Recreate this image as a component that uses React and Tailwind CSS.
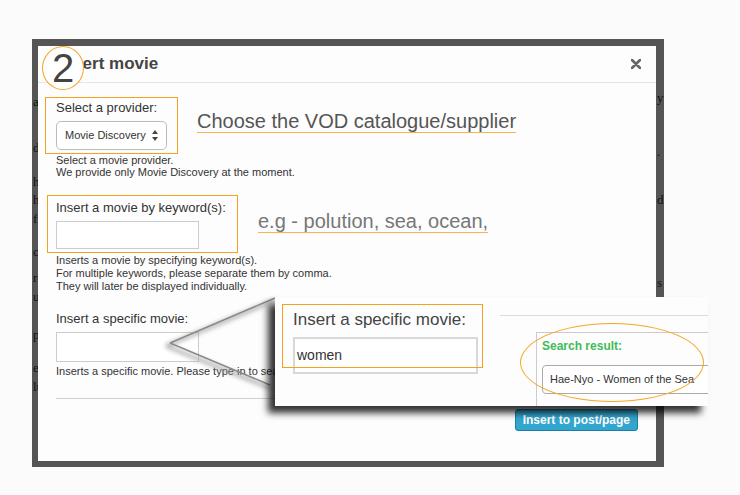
import { useState } from "react";

const frameLeftBits = [
  { t: "ar", y: 55 },
  { t: "d", y: 101 },
  { t: "h", y: 135 },
  { t: "h", y: 153 },
  { t: "ff", y: 172 },
  { t: "c", y: 205 },
  { t: "rc", y: 231 },
  { t: "ur", y: 250 },
  { t: "p-", y: 288 },
  { t: "er", y: 321 },
  { t: "lu", y: 340 },
];

const frameRightBits = [
  { t: "y", y: 51 },
  { t: ".", y: 105 },
  { t: "d", y: 153 },
  { t: "s", y: 236 },
];

const OrangeBox = ({ className }) => (
  <span className={`pointer-events-none absolute border-[1.5px] border-[#f5a01f] ${className}`} />
);

const SelectArrows = () => (
  <svg width="6" height="11" viewBox="0 0 6 11">
    <path d="M3 0 L6 4 L0 4 Z" fill="#444" />
    <path d="M3 11 L6 7 L0 7 Z" fill="#444" />
  </svg>
);

const App = () => {
  const [provider] = useState("Movie Discovery");

  return (
    <div
      className="relative h-[495px] w-[740px] overflow-hidden bg-[#fbfbfb] pl-[32px] pt-[39px] text-[#333]"
      style={{ fontFamily: '"Liberation Sans", Arial, sans-serif' }}
    >
      {/* dark frame of the page behind */}
      <div className="relative h-[428px] w-[632px] bg-[#555] pl-[6px] pt-[7px]">
        {frameLeftBits.map((b, i) => (
          <span
            key={"l" + i}
            className="absolute left-[1px] text-[13px] leading-[16px] text-[#111]"
            style={{ top: b.y, fontFamily: '"Liberation Serif", serif' }}
          >
            {b.t}
          </span>
        ))}
        {frameRightBits.map((b, i) => (
          <span
            key={"r" + i}
            className="absolute left-[625px] text-[13px] leading-[16px] text-[#111]"
            style={{ top: b.y, fontFamily: '"Liberation Serif", serif' }}
          >
            {b.t}
          </span>
        ))}

        {/* modal */}
        <div className="relative h-[415px] w-[618px] bg-[#fdfdfd]">
          <div className="flex h-[37px] items-center justify-between border-b border-[#e5e5e5] pl-[20px] pr-[15px]">
            <h1 className="text-[17px] font-bold text-[#444]">Insert movie</h1>
            <svg width="10" height="10" viewBox="0 0 10 10">
              <path d="M1 1 L9 9 M9 1 L1 9" stroke="#666" strokeWidth="2.6" strokeLinecap="round" />
            </svg>
          </div>

          {/* step number */}
          <div className="absolute left-[4px] top-0 flex h-[44px] w-[42px] items-center justify-center rounded-[50%] border-[1.5px] border-[#f5a623] bg-white">
            <span className="text-[40px] leading-none text-[#444]">2</span>
          </div>

          <div className="pl-[18px] pr-[18px] pt-[17px]">
            {/* provider */}
            <div className="flex items-start">
              <div className="relative w-[141px]">
                <OrangeBox className="-left-[11px] -top-[3px] h-[57px] w-[133px]" />
                <div className="text-[13px] leading-[16px]">Select a provider:</div>
                <div className="mt-[5px] flex h-[29px] w-[111px] items-center justify-between rounded-[5px] border border-[#bbb] bg-white pl-[8px] pr-[8px] text-[11px]">
                  <span>{provider}</span>
                  <SelectArrows />
                </div>
              </div>
              <div className="mt-[10px] border-b-[1.5px] border-[#fbb24e] text-[20px] leading-[22px] text-[#555]">
                Choose the VOD catalogue/supplier
              </div>
            </div>
            <p className="mt-[5px] text-[11px] leading-[11.5px]">
              Select a movie provider.
              <br />
              We provide only Movie Discovery at the moment.
            </p>

            {/* keywords */}
            <div className="mt-[22px] flex items-start">
              <div className="relative w-[202px]">
                <OrangeBox className="-left-[9px] -top-[5px] h-[58px] w-[191px]" />
                <div className="text-[13px] leading-[16px]">Insert a movie by keyword(s):</div>
                <div className="mt-[5px] h-[28px] w-[143px] border border-[#ccc] bg-white" />
              </div>
              <div className="mt-[10px] border-b-[1.5px] border-[#fbb24e] text-[20px] leading-[22px] text-[#777]">
                e.g - polution, sea, ocean,
              </div>
            </div>
            <p className="mt-[5px] text-[11px] leading-[13px]">
              Inserts a movie by specifying keyword(s).
              <br />
              For multiple keywords, please separate them by comma.
              <br />
              They will later be displayed individually.
            </p>

            {/* specific movie */}
            <div className="mt-[18px] text-[13px] leading-[16px]">Insert a specific movie:</div>
            <div className="mt-[5px] h-[30px] w-[143px] border border-[#ccc] bg-white" />
            <p className="mt-[3px] text-[11px] leading-[12px]">
              Inserts a specific movie. Please type in to search for a movie.
            </p>

            <div className="mt-[21px] border-t border-[#d0d0d0]" />
            <div className="mt-[10px] flex justify-end">
              <button className="h-[22px] rounded-[3px] border border-[#1c7ea6] bg-[#33a6cf] px-[7px] text-[12px] font-bold leading-none text-white">
                Insert to post/page
              </button>
            </div>
          </div>
        </div>
      </div>

      {/* callout lines */}
      <svg className="pointer-events-none absolute left-0 top-0" width="740" height="495">
        <defs>
          <filter id="blur" x="-20%" y="-20%" width="140%" height="140%">
            <feGaussianBlur stdDeviation="2" />
          </filter>
        </defs>
        <path d="M166 346 L275 300 M166 346 L270 388" stroke="#999" strokeWidth="4" fill="none" filter="url(#blur)" opacity="0.7" />
        <path d="M170 343 L275 298 M170 343 L270 385" stroke="#8a8a8a" strokeWidth="1.5" fill="none" />
      </svg>

      {/* zoomed popup */}
      <div className="absolute left-[275px] top-[297px] flex h-[109px] w-[433px] items-start overflow-hidden bg-[#fdfdfd] pl-[18px] pt-[13px] shadow-[-7px_7px_7px_rgba(0,0,0,0.8)]">
        <div className="relative w-[185px] shrink-0">
          <OrangeBox className="-left-[11px] -top-[6px] z-10 h-[64px] w-[201px]" />
          <div className="text-[17px] leading-[20px] text-[#444]">Insert a specific movie:</div>
          <div className="mt-[7px] flex h-[37px] items-center border-2 border-[#d8d8d8] bg-white pl-[2px] text-[14px] text-[#333]">
            women
          </div>
        </div>

        <div className="ml-[22px] flex-1 pt-[5px]">
          <div className="border-t border-[#ddd]" />
          <div className="ml-[36px] mt-[16px] h-[100px] w-[200px] border border-[#ccc] pl-[5px] pt-[6px]">
            <div className="text-[12px] font-bold leading-[14px] text-[#41bb57]">Search result:</div>
            <div className="mt-[12px] flex h-[29px] items-center rounded-l-[4px] border border-[#aaa] bg-white pl-[7px] text-[11px] text-[#333]">
              Hae-Nyo - Women of the Sea
            </div>
          </div>
        </div>
        <span className="pointer-events-none absolute left-[245px] top-[26px] h-[79px] w-[184px] rounded-[50%] border-[1.5px] border-[#f5a623]" />
      </div>
    </div>
  );
};

export default App;
